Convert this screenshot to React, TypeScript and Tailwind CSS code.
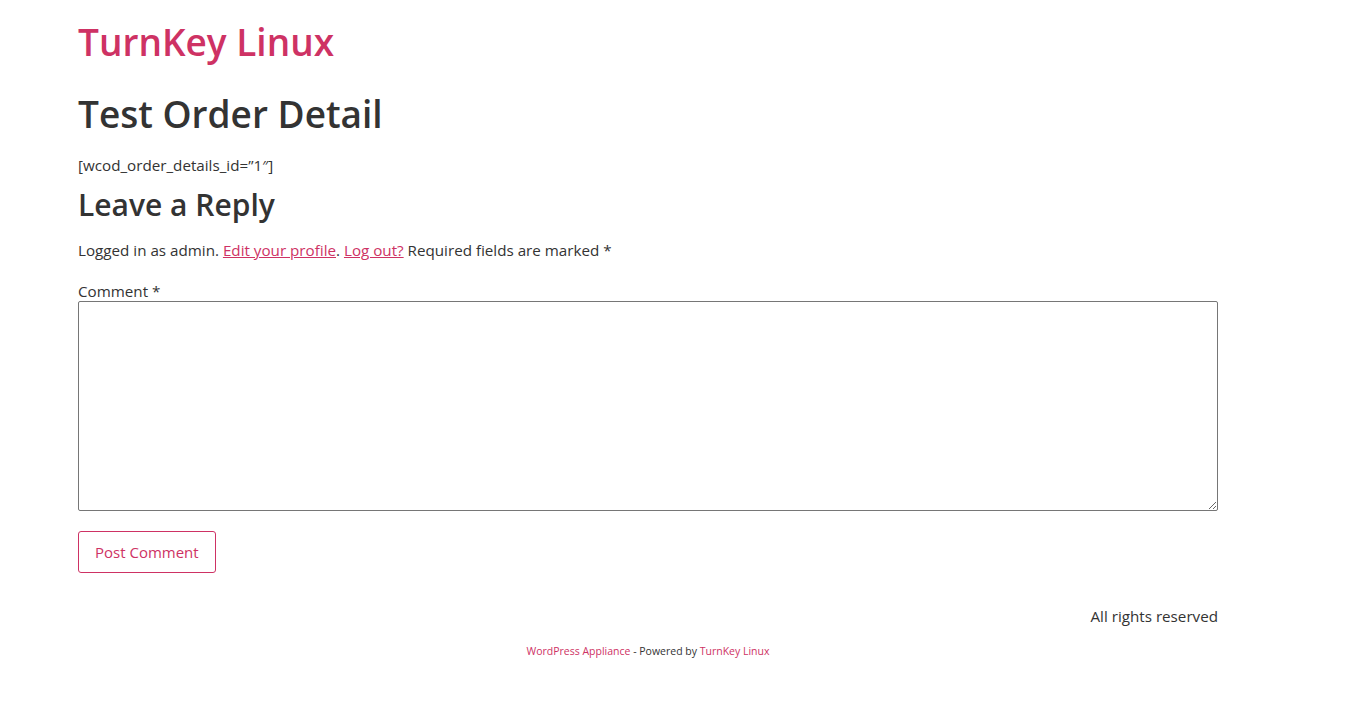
export default function App() {
  return (
    <div className="min-h-screen bg-white text-[#333] font-['Open_Sans',sans-serif]">
      <div className="w-[1140px] ml-[78px]">
        <header className="pt-[18px]">
          <a href="#" className="text-[37px] leading-[48px] font-semibold text-[#ce3264]">
            TurnKey Linux
          </a>
        </header>

        <main className="mt-[24px]">
          <h1 className="text-[37px] leading-[48px] font-semibold text-[#333]">Test Order Detail</h1>
          <p className="mt-[15px] text-[15.2px] leading-6">[wcod_order_details_id=”1″]</p>

          <section className="mt-[9px]">
            <h2 className="text-[30px] leading-[38px] font-semibold">Leave a Reply</h2>
            <p className="mt-[14px] text-[15.2px] leading-6">
              Logged in as admin.{" "}
              <a href="#" className="text-[#ce3264] underline">Edit your profile</a>.{" "}
              <a href="#" className="text-[#ce3264] underline">Log out?</a> Required fields are marked *
            </p>
            <label className="block mt-[19px] text-[15.2px] leading-5">Comment *</label>
            <textarea className="block w-full h-[210px] border border-[#767676] rounded-[2px] resize-y" />
            <button className="mt-[20px] h-[42px] px-4 border border-[#ce3264] rounded-[3px] text-[#ce3264] text-[15px]">
              Post Comment
            </button>
          </section>
        </main>

        <footer className="mt-[31px]">
          <p className="text-right text-[15.2px] leading-6">All rights reserved</p>
          <p className="mt-[15px] text-center text-[10.5px] leading-4">
            <a href="#" className="text-[#ce3264]">WordPress Appliance</a> - Powered by{" "}
            <a href="#" className="text-[#ce3264]">TurnKey Linux</a>
          </p>
        </footer>
      </div>
    </div>
  );
}
